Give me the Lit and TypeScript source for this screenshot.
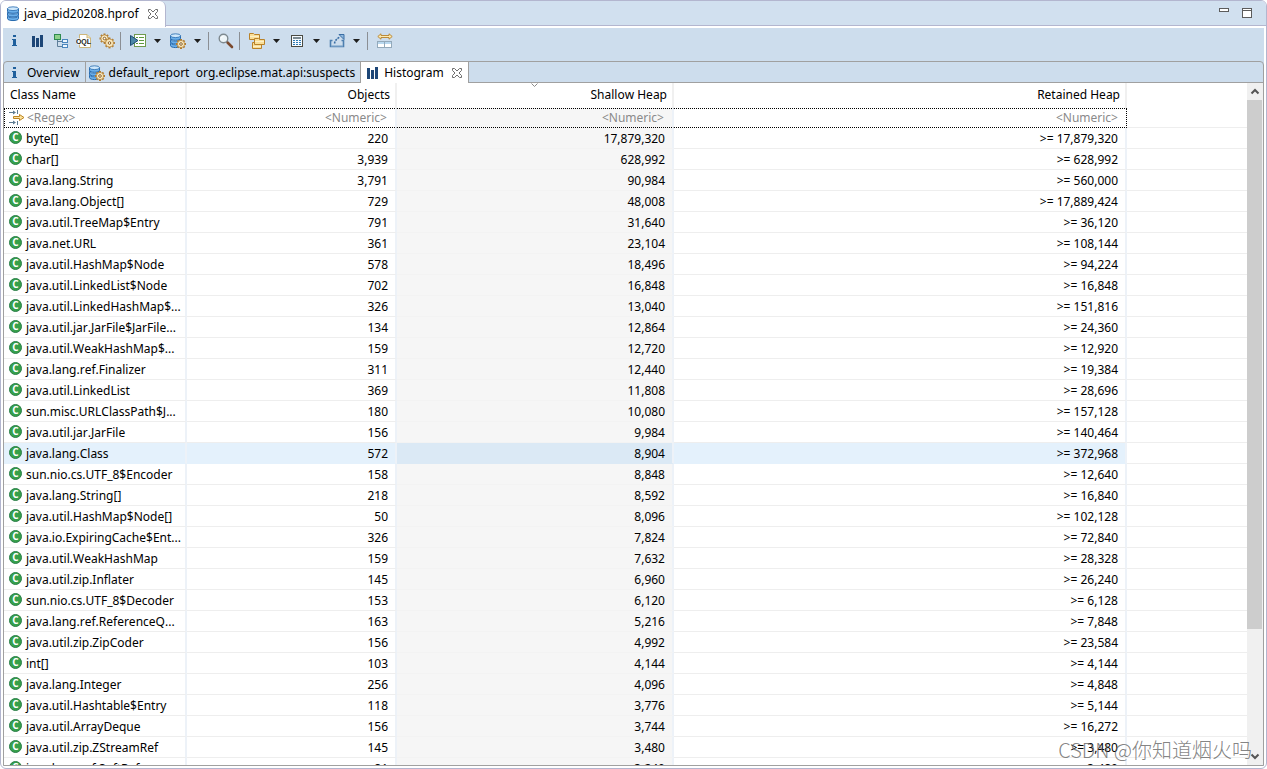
import { LitElement, html, css, svg, nothing } from "lit";
import { customElement, state } from "lit/decorators.js";

type Row = [string, string, string, string];

const ROWS: Row[] = [
  ["byte[]", "220", "17,879,320", "17,879,320"],
  ["char[]", "3,939", "628,992", "628,992"],
  ["java.lang.String", "3,791", "90,984", "560,000"],
  ["java.lang.Object[]", "729", "48,008", "17,889,424"],
  ["java.util.TreeMap$Entry", "791", "31,640", "36,120"],
  ["java.net.URL", "361", "23,104", "108,144"],
  ["java.util.HashMap$Node", "578", "18,496", "94,224"],
  ["java.util.LinkedList$Node", "702", "16,848", "16,848"],
  ["java.util.LinkedHashMap$...", "326", "13,040", "151,816"],
  ["java.util.jar.JarFile$JarFile...", "134", "12,864", "24,360"],
  ["java.util.WeakHashMap$...", "159", "12,720", "12,920"],
  ["java.lang.ref.Finalizer", "311", "12,440", "19,384"],
  ["java.util.LinkedList", "369", "11,808", "28,696"],
  ["sun.misc.URLClassPath$J...", "180", "10,080", "157,128"],
  ["java.util.jar.JarFile", "156", "9,984", "140,464"],
  ["java.lang.Class", "572", "8,904", "372,968"],
  ["sun.nio.cs.UTF_8$Encoder", "158", "8,848", "12,640"],
  ["java.lang.String[]", "218", "8,592", "16,840"],
  ["java.util.HashMap$Node[]", "50", "8,096", "102,128"],
  ["java.io.ExpiringCache$Ent...", "326", "7,824", "72,840"],
  ["java.util.WeakHashMap", "159", "7,632", "28,328"],
  ["java.util.zip.Inflater", "145", "6,960", "26,240"],
  ["sun.nio.cs.UTF_8$Decoder", "153", "6,120", "6,128"],
  ["java.lang.ref.ReferenceQ...", "163", "5,216", "7,848"],
  ["java.util.zip.ZipCoder", "156", "4,992", "23,584"],
  ["int[]", "103", "4,144", "4,144"],
  ["java.lang.Integer", "256", "4,096", "4,848"],
  ["java.util.Hashtable$Entry", "118", "3,776", "5,144"],
  ["java.util.ArrayDeque", "156", "3,744", "16,272"],
  ["java.util.zip.ZStreamRef", "145", "3,480", "3,480"],
  ["java.lang.ref.SoftRefere...", "81", "3,240", "3,480"],
];

const icon = (body: unknown, w = 16, h = 16) =>
  html`<svg width=${w} height=${h} viewBox="0 0 ${w} ${h}" aria-hidden="true">${body}</svg>`;

const teeth = (cx: number, cy: number, r: number) =>
  [0, 45, 90, 135, 180, 225, 270, 315].map(
    (a) => svg`<rect x=${cx - 1} y=${cy - r} width="2" height="2" fill="#b07c30" transform="rotate(${a} ${cx} ${cy})"/>`
  );

const gear = (cx: number, cy: number, r: number) => svg`
  ${teeth(cx, cy, r)}
  <circle cx=${cx} cy=${cy} r=${r - 1.4} fill="#fbe9bd" stroke="#b8873c" stroke-width=".8"/>
  <circle cx=${cx} cy=${cy} r="1.3" fill="#fff" stroke="#7d5218" stroke-width=".9"/>`;

const cylinder = (x: number, w: number, h: number) => {
  const r = x + w;
  const m = x + w / 2;
  const band = (y: number) => svg`
    <path d="M${x} ${y}V${y + h}C${x} ${y + h + 2.6} ${r} ${y + h + 2.6} ${r} ${y + h}V${y}Z" fill="#6cb0ea" stroke="#2569ae"/>
    <ellipse cx=${m} cy=${y} rx=${w / 2} ry="1.9" fill="#cfe8fb" stroke="#2569ae" stroke-width=".8"/>`;
  return svg`${band(10)}${band(6.4)}${band(2.7)}`;
};

const ICONS = {
  info: icon(svg`<g fill="#1f5f9c"><rect x="6" y="2" width="3" height="2"/><path d="M5 6h4v6h1v1H5v-1h1V7H5z"/></g>`),
  bars: icon(svg`<g fill="#1d4677"><rect x="2" y="3" width="3" height="11"/><rect x="6" y="5" width="3" height="9"/><rect x="10" y="2" width="3" height="12"/></g>`),
  tree: icon(svg`
    <path d="M4.500 6v7.500H9M4.500 8.500H9" fill="none" stroke="#5f7f9a"/>
    <rect x="1.500" y="1.500" width="6" height="5" fill="#8fd08a" stroke="#2e8a4e"/>
    <rect x="9.500" y="6.500" width="5" height="3" fill="#eef6ff" stroke="#4a86bd"/>
    <rect x="9.500" y="11.500" width="5" height="3" fill="#eef6ff" stroke="#4a86bd"/>`),
  page: svg`
    <path d="M3.500 1.500H11l3.500 3.500v9.500h-11z" fill="#fff" stroke="#cdb67c"/>
    <path d="M11 1.500V5h3.500" fill="#f3e3b4" stroke="#cdb67c"/>
    <path d="M1 5.500h12v6H1z" fill="#fff"/>`,
  gears: icon(svg`${gear(5.500, 5.500, 5)}${gear(10.500, 10, 5.400)}`),
  run: icon(svg`
    <rect x="4.500" y="1.500" width="11" height="12" fill="#fff" stroke="#6f9a4e"/>
    <path d="M6 4.500h2M9 4.500h5M6 7.500h2M9 7.500h5M6 10.500h2M9 10.500h5" stroke="#5d9a3f"/>
    <path d="M.5 2.500V12.500L8 7.500z" fill="#4b87a8" stroke="#1e4d74"/>`),
  db: icon(cylinder(2.500, 11, 2.600)),
  dbGear: icon(svg`${cylinder(0.5, 10, 2.600)}${gear(11, 11, 5)}`),
  search: icon(svg`
    <path d="M9.500 9.500l4.500 4.500" stroke="#7b4a2e" stroke-width="2.600" stroke-linecap="round"/>
    <circle cx="5.500" cy="5.500" r="4.300" fill="#eef5f8" stroke="#7f8a90" stroke-width="1.400"/>
    <path d="M3.300 5.300a2.300 2.300 0 0 1 2-2" stroke="#fff" fill="none"/>`),
  group: icon(svg`<g fill="#f9df98" stroke="#b9822a">
    <path d="M.5.5h4l1 1h5v5H.5z"/><path d="M3.500 9.500h4l1 1h4v5h-9z"/><path d="M5.500 5.500h4l1 1h5v5h-10z"/></g>
    <path d="M1 3.500h9M6 8.500h9M4 13.500h8" stroke="#fdf0c8"/>`),
  calc: icon(svg`
    <rect x="2.500" y="2.500" width="11" height="11" fill="#f6fbff" stroke="#4a4a42"/>
    <path d="M4 5h8" stroke="#7b8a91" stroke-width="2"/>
    <path d="M4 7.500h8M4 9.500h8M4 11.500h8" stroke="#2f7cb5" stroke-dasharray="2 1"/>`),
  share: icon(svg`
    <path d="M3.500 7.500H1.500v6h13v-6h-2" fill="none" stroke="#4d7fb0" stroke-width="1.600"/>
    <path d="M2 13h12" stroke="#8fb2d3"/>
    <path d="M5.500 10.500C6 7.500 8 5.500 11 4" fill="none" stroke="#3a6ea5" stroke-width="1.600" stroke-dasharray="2 1"/>
    <path d="M10 1.500h5v5z" fill="#8fb8de" stroke="#3a6ea5"/>`),
  columns: icon(svg`
    <path d="M.8 3.500L4 .8v1.700h8V.8l3.200 2.700L12 6.200V4.500H4v1.700z" fill="#fdeab0" stroke="#b5812a" stroke-width=".9"/>
    <rect x=".5" y="8.500" width="7" height="6" fill="#fff" stroke="#93a9ba"/>
    <rect x="7.500" y="8.500" width="7" height="6" fill="#fff" stroke="#93a9ba"/>
    <path d="M1 10h6M8 10h6" stroke="#b9d8ef" stroke-width="2"/>`),
  filter: icon(svg`
    <path d="M0 2.500h6M0 12.500h6M8.500 0v4M8.500 11v4" stroke="#5e7c92"/>
    <path d="M4 .5l3 2-3 2zM4 10.500l3 2-3 2z" fill="#5e7c92"/>
    <path d="M4.500 6.500h6v-2l4.500 3-4.500 3v-2h-6z" fill="#fbe3a0" stroke="#bd8420"/>`),
  close: icon(svg`<path d="M1.500 1.500h2l2.500 2.500 2.500-2.500h2v2L8 6l2.500 2.500v2h-2L6 8l-2.500 2.500h-2v-2L4 6 1.500 3.500z" fill="#fff" stroke="#6e6e6e"/>`, 12, 12),
  caret: icon(svg`<path d="M0 0h7L3.500 4z" fill="#1e1e1e"/>`, 7, 4),
  up: icon(svg`<path d="M1.500 5.500L5 2l3.500 3.500" fill="none" stroke="#555" stroke-width="2"/>`, 10, 7),
  down: icon(svg`<path d="M1.500 1.500L5 5l3.500-3.500" fill="none" stroke="#555" stroke-width="2"/>`, 10, 7),
  sort: icon(svg`<path d="M.5.5l3 3 3-3" fill="none" stroke="#8a8a8a"/>`, 7, 5),
  minimize: icon(svg`<rect x=".5" y=".5" width="9" height="3" fill="#fff" stroke="#5c5c5c"/>`, 10, 4),
  maximize: icon(svg`<rect x=".5" y=".5" width="9" height="9" fill="#fff" stroke="#5c5c5c"/><path d="M0 2.500h10" stroke="#5c5c5c"/>`, 10, 10),
};

@customElement("app-root")
export class AppRoot extends LitElement {
  @state() private selected = 15;

  static styles = css`
    :host {
      display: flex;
      flex-direction: column;
      height: 100vh;
      box-sizing: border-box;
      position: relative;
      overflow: hidden;
      background: #fff;
      border: 1px solid #b3b6cf;
      border-radius: 6px;
      font: 12px/20px "Noto Sans", "Noto Sans CJK SC", sans-serif;
      font-kerning: none;
      color: #000;
    }
    button {
      font: inherit;
      font-kerning: inherit;
      color: inherit;
      background: none;
      border: 0;
      padding: 0;
      margin: 0;
      display: flex;
      align-items: center;
    }
    svg { display: block; flex: none; }
    .titlebar {
      display: flex;
      flex: none;
      height: 24px;
      background: #d1e0ef;
      border-bottom: 1px solid #b3b6cf;
    }
    .editor-tab {
      display: flex;
      align-items: center;
      gap: 8px;
      height: 26px;
      box-sizing: border-box;
      padding: 0 6px 0 4px;
      background: #fff;
      border-right: 1px solid #b3b6cf;
      border-radius: 0 6px 0 0;
    }
    .editor-tab button { gap: 3px; }
    .window-actions {
      display: flex;
      align-items: flex-start;
      gap: 13px;
      margin-left: auto;
      padding: 7px 14px 0 0;
    }
    .body {
      display: flex;
      flex-direction: column;
      flex: 1;
      min-height: 0;
      margin: 2px;
      background: #cddded;
    }
    .toolbar {
      display: flex;
      flex: none;
      align-items: center;
      height: 33px;
      box-sizing: border-box;
      padding-bottom: 7px;
    }
    .tool { width: 23px; height: 23px; justify-content: center; }
    .tool.menu { width: 40px; justify-content: flex-start; gap: 8px; padding-left: 4px; box-sizing: border-box; }
    .sep { width: 1px; height: 18px; margin: 0 5px 0 2px; background: #8b8f94; }
    .oql { font: bold 7px "Liberation Sans", sans-serif; fill: #222; }
    .panel {
      display: flex;
      flex-direction: column;
      flex: 1;
      min-height: 0;
      border: 1px solid #a0a0a0;
      border-radius: 4px 4px 0 0;
    }
    .tabs { display: flex; flex: none; height: 20px; border-bottom: 1px solid #a0a0a0; }
    .tab {
      display: flex;
      align-items: center;
      box-sizing: border-box;
      height: 20px;
      gap: 4px;
      padding: 1px 5px 0 3px;
      border-right: 1px solid #a0a0a0;
      white-space: pre;
    }
    .tab.active { height: 21px; gap: 7px; padding: 0 5px 0 4px; background: #fff; }
    .tab.active .label { display: flex; gap: 3px; }
    .view { display: flex; flex: 1; min-height: 0; background: #fff; }
    .scroll { flex: 1; min-width: 0; overflow: hidden; }
    table { width: 100%; border-collapse: separate; border-spacing: 0; table-layout: fixed; }
    .c-name { width: 183px; }
    .c-objects { width: 210px; }
    .c-shallow { width: 277px; }
    .c-retained { width: 453px; }
    th, td {
      box-sizing: border-box;
      height: 21px;
      padding: 2px 7px 0 0;
      border-bottom: 1px solid #eeeeee;
      border-right: 2px solid #edf2f8;
      text-align: right;
      font-weight: normal;
      line-height: 18px;
      white-space: nowrap;
      overflow: hidden;
    }
    th { height: 25px; padding: 0 5px 2px 0; border-bottom: 0; border-right-color: #f0f0f0; }
    th:first-child { text-align: left; padding-left: 6px; }
    th:last-child, td:last-child { border-right: 0; }
    .sort-mark { display: flex; justify-content: center; height: 4px; }
    .sort-head { line-height: 16px; vertical-align: top; padding: 0 5px; }
    .name { padding: 2px 0 0 4px; }
    .name-inner { display: flex; align-items: flex-start; gap: 2px; }
    .sorted { background: #f6f6f6; border-bottom-color: #f3f3f3; }
    .selected td { background: #e4f1fc; border-bottom-color: #e4f1fc; }
    .selected .sorted { background: #dbe9f5; border-bottom-color: #dbe9f5; }
    .selected td:last-child { background: #fff; border-bottom-color: #eee; }
    .filter td {
      height: 20px;
      padding: 0 8px 0 0;
      border-top: 1px dotted #000;
      border-bottom: 1px dotted #000;
    }
    .filter td:first-child { border-left: 1px dotted #000; }
    .filter td:nth-child(4) { border-right: 1px dotted #000; }
    .filter td:last-child { border-top-color: transparent; border-bottom: 1px solid #eee; }
    .filter .name { padding: 0 0 0 4px; }
    .filter .name-inner { align-items: center; }
    input {
      display: block;
      width: 100%;
      min-width: 0;
      height: 18px;
      box-sizing: border-box;
      padding: 0;
      border: 0;
      background: none;
      outline: 0;
      font: inherit;
      font-kerning: inherit;
      color: inherit;
      text-align: right;
    }
    .name input { text-align: left; }
    input::placeholder { color: #8a8a8a; opacity: 1; }
    .scrollbar { display: flex; flex-direction: column; flex: none; width: 16px; background: #f0f0f0; }
    .scrollbar button { height: 17px; justify-content: center; }
    .thumb { flex: 529; margin-right: 1px; background: #cdcdcd; }
    .rest { flex: 119; }
    .badge { font: bold 10px "Open Sans", sans-serif; fill: #fff; }
    .watermark {
      position: absolute;
      right: 14px;
      bottom: 4px;
      font: 300 20px/28px "Noto Sans CJK SC", sans-serif;
      color: rgba(100, 100, 100, 0.8);
      pointer-events: none;
    }
  `;

  private tool(label: string, glyph: unknown, menu = false) {
    return html`<button class="tool ${menu ? "menu" : ""}" aria-label=${label}>${glyph}${menu ? ICONS.caret : nothing}</button>`;
  }

  private classIcon() {
    return icon(svg`<circle cx="7.500" cy="7.500" r="6" fill="#36a04a" stroke="#2b7f4a"/><text class="badge" x="7.500" y="11" text-anchor="middle">C</text>`);
  }

  render() {
    const sep = html`<span class="sep"></span>`;
    const oql = icon(svg`${ICONS.page}<text class="oql" x="7.500" y="11" text-anchor="middle">OQL</text>`);
    return html`
      <header class="titlebar">
        <div class="editor-tab">
          <button>${ICONS.db}<span>java_pid20208.hprof</span></button>
          <button aria-label="Close file">${ICONS.close}</button>
        </div>
        <div class="window-actions">
          <button aria-label="Minimize">${ICONS.minimize}</button>
          <button aria-label="Maximize">${ICONS.maximize}</button>
        </div>
      </header>
      <main class="body">
        <div class="toolbar" role="toolbar">
          ${this.tool("Overview", ICONS.info)}${this.tool("Histogram", ICONS.bars)}
          ${this.tool("Dominator tree", ICONS.tree)}${this.tool("Query", oql)}
          ${this.tool("Thread overview", ICONS.gears)}${sep}
          ${this.tool("Run report", ICONS.run, true)}${this.tool("Query browser", ICONS.dbGear, true)}${sep}
          ${this.tool("Find", ICONS.search)}${sep}
          ${this.tool("Group", ICONS.group, true)}${this.tool("Calculate", ICONS.calc, true)}
          ${this.tool("Export", ICONS.share, true)}${sep}
          ${this.tool("Compare", ICONS.columns)}
        </div>
        <section class="panel">
          <div class="tabs" role="tablist">
            <button class="tab" role="tab">${ICONS.info}<span>Overview</span></button>
            <button class="tab" role="tab">${ICONS.dbGear}<span>default_report  org.eclipse.mat.api:suspects</span></button>
            <div class="tab active">
              <button class="label" role="tab" aria-selected="true">${ICONS.bars}<span>Histogram</span></button>
              <button aria-label="Close Histogram">${ICONS.close}</button>
            </div>
          </div>
          <div class="view">
            <div class="scroll">
              <table>
                <colgroup>
                  <col class="c-name" /><col class="c-objects" /><col class="c-shallow" /><col class="c-retained" /><col />
                </colgroup>
                <thead>
                  <tr>
                    <th>Class Name</th>
                    <th>Objects</th>
                    <th class="sort-head"><span class="sort-mark">${ICONS.sort}</span>Shallow Heap</th>
                    <th>Retained Heap</th>
                    <th></th>
                  </tr>
                </thead>
                <tbody>
                  <tr class="filter">
                    <td class="name"><div class="name-inner">${ICONS.filter}<input aria-label="Class name filter" placeholder="&lt;Regex&gt;" /></div></td>
                    <td><input aria-label="Objects filter" placeholder="&lt;Numeric&gt;" /></td>
                    <td class="sorted"><input aria-label="Shallow heap filter" placeholder="&lt;Numeric&gt;" /></td>
                    <td><input aria-label="Retained heap filter" placeholder="&lt;Numeric&gt;" /></td>
                    <td></td>
                  </tr>
                  ${ROWS.map(
                    ([name, objects, shallow, retained], i) => html`
                      <tr class=${i === this.selected ? "selected" : ""} @click=${() => (this.selected = i)}>
                        <td class="name"><div class="name-inner">${this.classIcon()}<span>${name}</span></div></td>
                        <td>${objects}</td>
                        <td class="sorted">${shallow}</td>
                        <td>&gt;= ${retained}</td>
                        <td></td>
                      </tr>`
                  )}
                </tbody>
              </table>
            </div>
            <div class="scrollbar">
              <button aria-label="Scroll up">${ICONS.up}</button>
              <div class="thumb"></div>
              <div class="rest"></div>
              <button aria-label="Scroll down">${ICONS.down}</button>
            </div>
          </div>
        </section>
      </main>
      <div class="watermark">CSDN @你知道烟火吗</div>
    `;
  }
}
